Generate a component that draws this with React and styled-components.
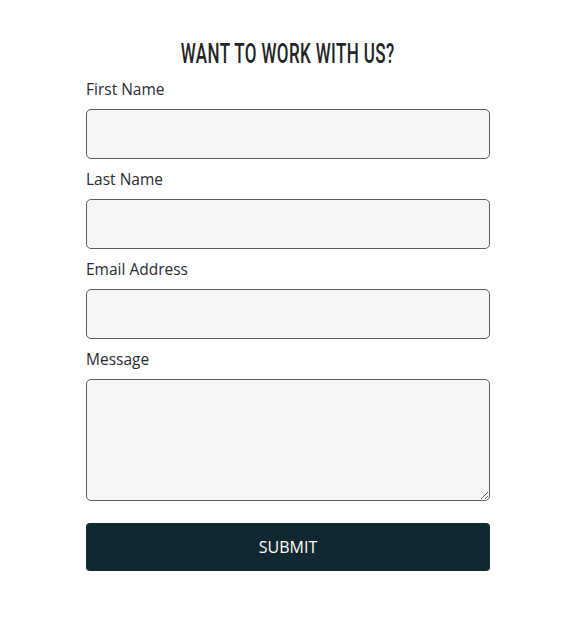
import React from "react";
import styled, { createGlobalStyle } from "styled-components";

const GlobalStyle = createGlobalStyle`
  body {
    margin: 0;
    background: #ffffff;
    font-family: 'Open Sans', 'Noto Sans', sans-serif;
  }
`;

const Page = styled.div`
  padding-top: 37px;
  display: flex;
  justify-content: center;
`;

const Form = styled.form`
  width: 404px;
  display: flex;
  flex-direction: column;
`;

// condensed display heading, squeezed to mimic a narrow face
const Heading = styled.h2`
  margin: 0 0 8px;
  text-align: center;
  font-family: 'Roboto', 'Liberation Sans', sans-serif;
  font-weight: 500;
  font-size: 27px;
  line-height: 34px;
  color: #1f2428;

  span {
    display: inline-block;
    white-space: nowrap;
    letter-spacing: 0.6px;
    transform: scaleX(0.63);
  }
`;

const Field = styled.div`
  display: flex;
  flex-direction: column;
  margin-bottom: 10px;
`;

const Label = styled.label`
  font-size: 15.5px;
  line-height: 20px;
  color: #2a2a33;
  margin-bottom: 10px;
`;

const Input = styled.input`
  box-sizing: border-box;
  height: 50px;
  border: 1px solid #5e5e5e;
  border-radius: 5px;
  background: #f5f5f5;
  padding: 0 12px;
  font-size: 15px;
`;

const TextArea = styled.textarea`
  box-sizing: border-box;
  height: 122px;
  border: 1px solid #5e5e5e;
  border-radius: 5px;
  background: #f5f5f5;
  padding: 10px 12px;
  font-size: 15px;
  resize: vertical;
`;

const SubmitButton = styled.button`
  margin-top: 12px;
  height: 48px;
  border: none;
  border-radius: 4px;
  background: #122830;
  color: #ffffff;
  font-family: 'Open Sans', 'Noto Sans', sans-serif;
  font-size: 16px;
  cursor: pointer;
`;

const fields = [
  { id: "first", label: "First Name" },
  { id: "last", label: "Last Name" },
  { id: "email", label: "Email Address" },
];

export default function App() {
  return (
    <>
      <GlobalStyle />
      <Page>
        <Form onSubmit={(e) => e.preventDefault()}>
          <Heading>
            <span>WANT TO WORK WITH US?</span>
          </Heading>
          {fields.map((f) => (
            <Field key={f.id}>
              <Label htmlFor={f.id}>{f.label}</Label>
              <Input id={f.id} type={f.id === "email" ? "email" : "text"} />
            </Field>
          ))}
          <Field>
            <Label htmlFor="message">Message</Label>
            <TextArea id="message" />
          </Field>
          <SubmitButton type="submit">SUBMIT</SubmitButton>
        </Form>
      </Page>
    </>
  );
}
